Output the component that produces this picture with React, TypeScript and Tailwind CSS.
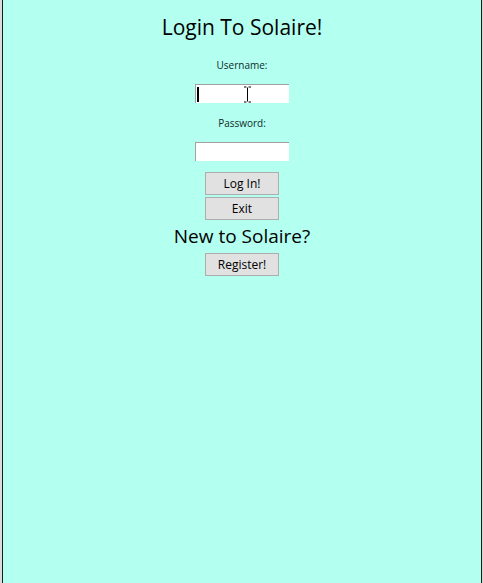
export default function App() {
  const font = { fontFamily: '"Open Sans", "Noto Sans", sans-serif' };
  return (
    <div className="flex h-[583px] w-[483px] bg-[#d4d4d4]" style={font}>
      <div className="w-[2px] bg-[#dcdcdc]" />
      <div className="flex flex-1 flex-col items-center border-x border-[#1c1c1c] bg-[#b3fff0] pt-[13px]">
        <h1 className="text-[21px] leading-[28px] text-black">Login To Solaire!</h1>
        <label className="mt-[17px] text-[10px] font-medium leading-[14px] text-[#0b2b2b]">Username:</label>
        <div className="mt-[12px] flex h-[19px] w-[94px] items-center border-l border-t border-[#a0a0a0] bg-white pl-[1px]">
          <span className="h-[15px] w-[2px] bg-black" />
          {/* mouse I-beam */}
          <svg width="9" height="17" viewBox="0 0 9 17" className="ml-[44px]">
            <path d="M1 1h2.5M5.5 1H8M4.5 1.5v14M1 16h2.5M5.5 16H8" stroke="black" strokeWidth="1" fill="none" />
          </svg>
        </div>
        <label className="mt-[13px] text-[10px] font-medium leading-[14px] text-[#0b2b2b]">Password:</label>
        <input type="password" className="mt-[12px] h-[19px] w-[94px] border-l border-t border-[#a0a0a0] bg-white outline-none" />
        <button className="mt-[11px] h-[23px] w-[74px] border border-[#adadad] bg-[#e1e1e1] text-[12px] text-black">Log In!</button>
        <button className="mt-[2px] h-[23px] w-[74px] border border-[#adadad] bg-[#e1e1e1] text-[12px] text-black">Exit</button>
        <h2 className="mt-[3px] text-[19px] leading-[26px] text-black">New to Solaire?</h2>
        <button className="mt-[4px] h-[23px] w-[74px] border border-[#adadad] bg-[#e1e1e1] text-[12px] text-black">Register!</button>
      </div>
      <div className="w-[1px] bg-[#d4d4d4]" />
    </div>
  );
}
